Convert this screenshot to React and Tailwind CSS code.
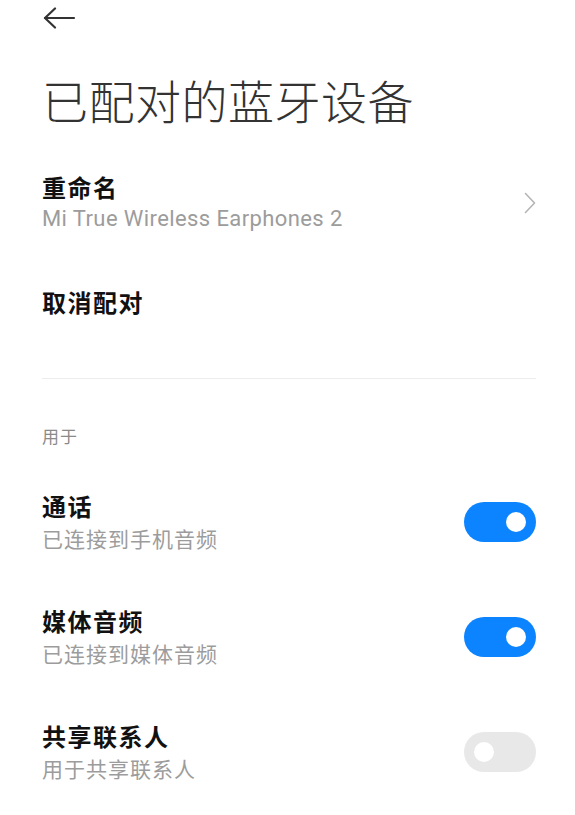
import React, { useState } from 'react';

const cjk = { fontFamily: '"Noto Sans CJK SC", "Noto Sans", sans-serif' };
const latin = { fontFamily: 'Roboto, "Noto Sans CJK SC", sans-serif' };

const Toggle = ({ on, onChange }) => (
  <button
    onClick={onChange}
    className={`relative w-[72px] h-[40px] rounded-full shrink-0 ${on ? 'bg-[#0d84ff]' : 'bg-[#e8e8e8]'}`}
  >
    <span
      className={`absolute top-[10px] w-[20px] h-[20px] rounded-full bg-white ${on ? 'left-[42px]' : 'left-[10px]'}`}
    />
  </button>
);

const ProfileRow = ({ title, subtitle, on, onChange }) => (
  <div className="h-[115px] flex items-center justify-between">
    <div>
      <div className="text-[24px] leading-[32px] font-bold text-[#111] tracking-[1.5px]">{title}</div>
      <div className="text-[21px] leading-[32px] text-[#9c9c9c] tracking-[1px]">{subtitle}</div>
    </div>
    <Toggle on={on} onChange={onChange} />
  </div>
);

export default function App() {
  const [call, setCall] = useState(true);
  const [media, setMedia] = useState(true);
  const [contacts, setContacts] = useState(false);

  return (
    <div className="w-[575px] h-[815px] bg-white overflow-hidden pl-[42px] pr-[39px]" style={cjk}>
      {/* back */}
      <div className="h-[36px] flex items-center">
        <svg width="34" height="22" viewBox="0 0 34 22" fill="none" stroke="#333" strokeWidth="2.2" strokeLinecap="round" strokeLinejoin="round">
          <path d="M3 11H32" />
          <path d="M13 1.5L3 11L13 20.5" />
        </svg>
      </div>

      <div className="h-[118px] pt-[35px]">
        <h1 className="text-[46px] leading-[56px] font-light text-[#333] tracking-[0.5px]">已配对的蓝牙设备</h1>
      </div>

      {/* rename */}
      <div className="h-[98px] flex items-center justify-between">
        <div>
          <div className="text-[24px] leading-[32px] font-bold text-[#111] tracking-[1.5px]">重命名</div>
          <div className="text-[22px] leading-[32px] text-[#9c9c9c] tracking-[0.4px]" style={latin}>Mi True Wireless Earphones 2</div>
        </div>
        <svg width="12" height="22" viewBox="0 0 12 22" fill="none" stroke="#b5b5b5" strokeWidth="1.6" strokeLinecap="round" strokeLinejoin="round">
          <path d="M1.5 1.5L10.5 11L1.5 20.5" />
        </svg>
      </div>

      {/* unpair */}
      <div className="h-[100px] flex items-center">
        <div className="text-[24px] leading-[32px] font-bold text-[#111] tracking-[1.5px]">取消配对</div>
      </div>

      <div className="h-[26px]" />
      <div className="h-px bg-[#ececec]" />

      <div className="h-[85px] pt-[47px]">
        <div className="text-[17px] leading-[20px] text-[#8a8a8a] tracking-[1px]">用于</div>
      </div>

      <ProfileRow title="通话" subtitle="已连接到手机音频" on={call} onChange={() => setCall(!call)} />
      <ProfileRow title="媒体音频" subtitle="已连接到媒体音频" on={media} onChange={() => setMedia(!media)} />
      <ProfileRow title="共享联系人" subtitle="用于共享联系人" on={contacts} onChange={() => setContacts(!contacts)} />
    </div>
  );
}
